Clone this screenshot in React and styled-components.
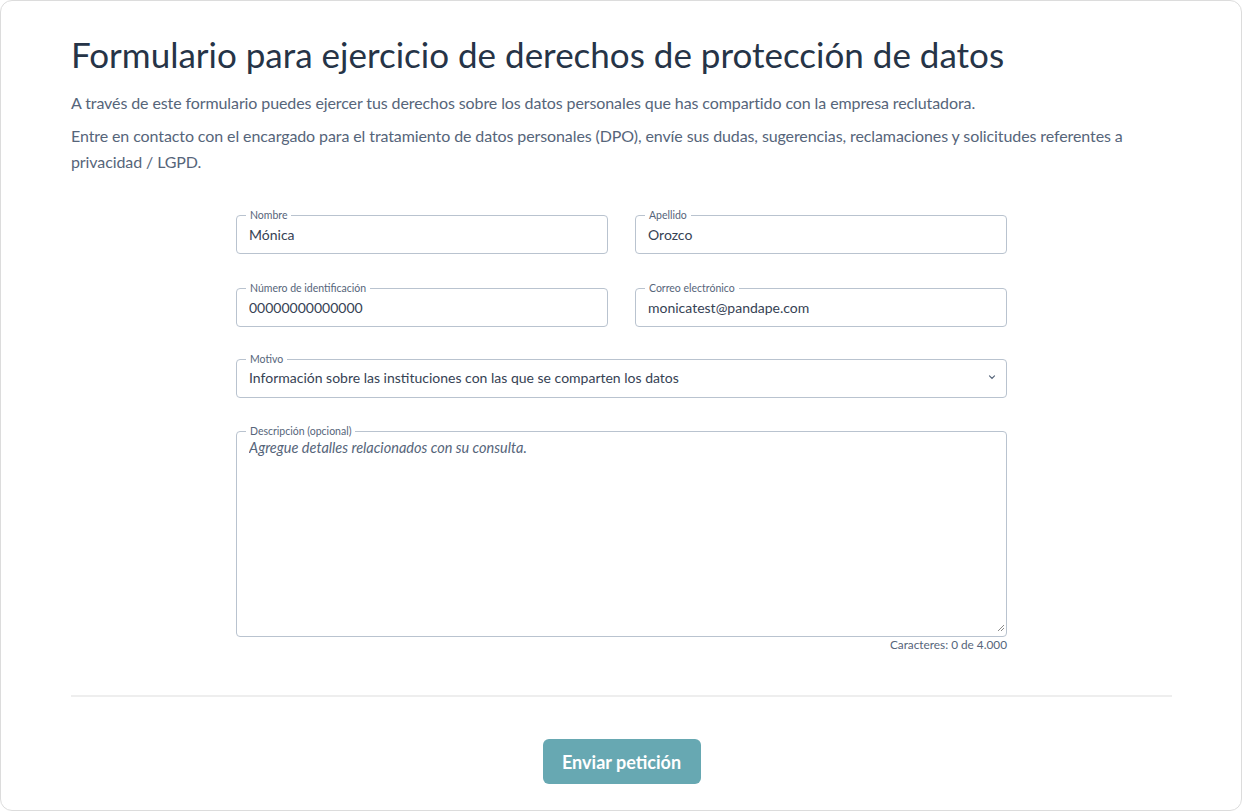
import React, { useState } from 'react';
import styled, { createGlobalStyle } from 'styled-components';

const GlobalStyle = createGlobalStyle`
  html, body {
    margin: 0;
    padding: 0;
    background: #ffffff;
  }
  * {
    box-sizing: border-box;
  }
  body {
    font-family: 'Lato', 'Noto Sans', sans-serif;
    color: #263447;
  }
`;

const Card = styled.div`
  width: 1242px;
  height: 811px;
  border: 1px solid #dcdcdc;
  border-radius: 12px;
  background: #fff;
  padding: 29px 69px 0 70px;
  display: flex;
  flex-direction: column;
`;

const Title = styled.h1`
  font-size: 35px;
  font-weight: 400;
  color: #263447;
  margin: 0 0 12px;
  line-height: 48px;
`;

const Lead = styled.p`
  font-size: 16px;
  line-height: 26px;
  color: #56657a;
  margin: 0 0 7px;
  letter-spacing: -0.1px;
`;

const Form = styled.form`
  width: 771px;
  margin: 27px auto 0;
  display: grid;
  grid-template-columns: 1fr 1fr;
  column-gap: 27px;
  row-gap: 28px;
`;

const Field = styled.fieldset`
  grid-column: ${(p) => (p.$wide ? '1 / -1' : 'auto')};
  margin: ${(p) => p.$offset || 0}px 0 0;
  padding: 0 12px;
  border: 1px solid #b9c3cf;
  border-radius: 4px;
  min-width: 0;
  height: ${(p) => p.$height || 45}px;
`;

const Legend = styled.legend`
  font-size: 10.5px;
  line-height: 12px;
  color: #56657a;
  padding: 0 4px;
  margin-left: -3px;
`;

const TextInput = styled.input`
  display: block;
  width: 100%;
  border: none;
  outline: none;
  padding: 0;
  margin-top: 3px;
  font-family: inherit;
  font-size: 14px;
  color: #364254;
  background: transparent;
  height: 20px;
`;

const SelectRow = styled.div`
  display: flex;
  align-items: center;
  justify-content: space-between;
  margin-top: 2px;
  height: 20px;
  font-size: 14px;
  color: #364254;
`;

const Chevron = styled.svg`
  width: 10px;
  height: 10px;
  color: #56657a;
  margin-right: -3px;
`;

const TextArea = styled.textarea`
  display: block;
  width: 100%;
  height: 185px;
  border: none;
  outline: none;
  resize: none;
  padding: 0;
  margin: 1px 0 0;
  font-family: inherit;
  font-size: 14.5px;
  line-height: 20px;
  color: #364254;
  background: transparent;

  &::placeholder {
    color: #56657a;
    font-style: italic;
  }
`;

const GripRow = styled.div`
  display: flex;
  justify-content: flex-end;
  margin-right: -11px;
`;

const Grip = styled.svg`
  width: 9px;
  height: 9px;
  display: block;
`;

const DescBlock = styled.div`
  grid-column: 1 / -1;
  margin-top: -1px;
  display: flex;
  flex-direction: column;
`;

const Counter = styled.div`
  align-self: flex-end;
  margin-top: 0;
  font-size: 11.8px;
  line-height: 16px;
  color: #56657a;
`;

const Divider = styled.hr`
  width: 100%;
  border: none;
  border-top: 2px solid #eeeeee;
  margin: 42px 0 0;
`;

const Actions = styled.div`
  display: flex;
  justify-content: center;
  padding-top: 42px;
`;

const SubmitButton = styled.button`
  width: 158px;
  height: 45px;
  border: none;
  border-radius: 6px;
  background: #67a8b2;
  color: #fff;
  font-family: inherit;
  font-size: 18px;
  font-weight: 700;
  cursor: pointer;
`;

export default function App() {
  const [desc, setDesc] = useState('');

  return (
    <>
      <GlobalStyle />
      <Card>
        <Title>Formulario para ejercicio de derechos de protección de datos</Title>
        <Lead>
          A través de este formulario puedes ejercer tus derechos sobre los datos personales que has compartido con la
          empresa reclutadora.
        </Lead>
        <Lead>
          Entre en contacto con el encargado para el tratamiento de datos personales (DPO), envíe sus dudas,
          sugerencias, reclamaciones y solicitudes referentes a privacidad / LGPD.
        </Lead>

        <Form onSubmit={(e) => e.preventDefault()}>
          <Field>
            <Legend>Nombre</Legend>
            <TextInput defaultValue="Mónica" />
          </Field>
          <Field>
            <Legend>Apellido</Legend>
            <TextInput defaultValue="Orozco" />
          </Field>
          <Field>
            <Legend>Número de identificación</Legend>
            <TextInput defaultValue="00000000000000" />
          </Field>
          <Field>
            <Legend>Correo electrónico</Legend>
            <TextInput defaultValue="monicatest@pandape.com" />
          </Field>
          <Field $wide $offset={-2}>
            <Legend>Motivo</Legend>
            <SelectRow>
              <span>Información sobre las instituciones con las que se comparten los datos</span>
              <Chevron viewBox="0 0 10 10" fill="none">
                <path d="M2.5 3.8 L5 6.3 L7.5 3.8" stroke="currentColor" strokeWidth="1.2" strokeLinecap="round" />
              </Chevron>
            </SelectRow>
          </Field>
          <DescBlock>
            <Field $height={212}>
              <Legend>Descripción (opcional)</Legend>
              <TextArea
                value={desc}
                onChange={(e) => setDesc(e.target.value)}
                placeholder="Agregue detalles relacionados con su consulta."
              />
              <GripRow>
                <Grip viewBox="0 0 9 9" fill="none">
                  <path d="M8 2 L2 8 M8 5 L5 8" stroke="#8a8a8a" strokeWidth="1" />
                </Grip>
              </GripRow>
            </Field>
            <Counter>Caracteres: {desc.length} de 4.000</Counter>
          </DescBlock>
        </Form>

        <Divider />
        <Actions>
          <SubmitButton type="submit">Enviar petición</SubmitButton>
        </Actions>
      </Card>
    </>
  );
}
